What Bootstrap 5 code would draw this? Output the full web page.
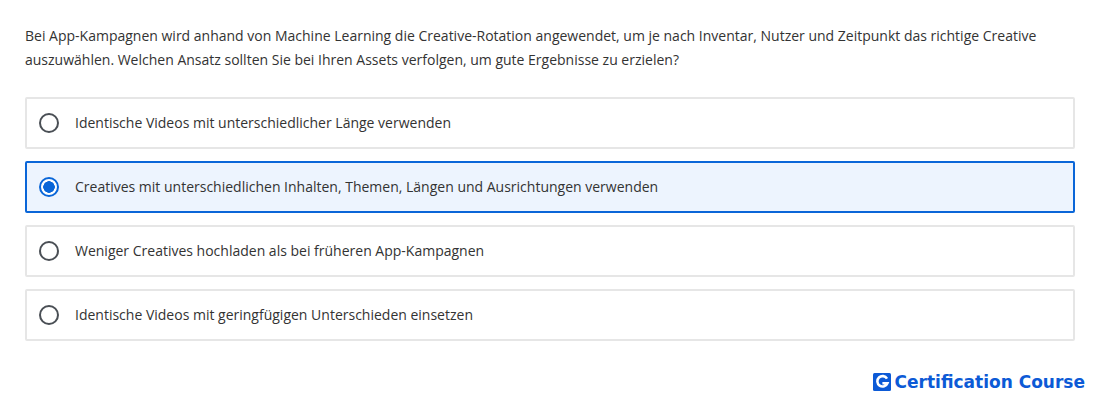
<!DOCTYPE html>
<html lang="de">
<head>
<meta charset="utf-8">
<title>Quiz</title>
<link href="https://cdn.jsdelivr.net/npm/bootstrap@5.3.0/dist/css/bootstrap.min.css" rel="stylesheet">
<style>
html,body{height:401px;overflow:hidden;background:#fff}
body{font-family:"Open Sans","Noto Sans",sans-serif;font-size:14px;color:#333}
.quiz-wrap{padding:24px 25px 0}
.quiz-q{line-height:24px;margin:0 0 25px;color:#333}
.quiz-list{gap:12px}
.quiz-opt{height:52px;border:2px solid #e6e6e6;border-radius:2px;padding:0 12px;gap:16px;color:#333;background:#fff}
.quiz-opt.is-on{border-color:#0a66d8;background:#edf4fe}
.quiz-radio{width:20px;height:20px;border:2px solid #4a4f55;border-radius:50%;flex:none;background:#fff}
.is-on .quiz-radio{border-color:#0a66d8;background:radial-gradient(circle,#0a66d8 0,#0a66d8 5.5px,#fff 6px)}
.quiz-label{margin-top:-1px;padding-bottom:1px}
.quiz-brand{padding:30px 15px 0 0;gap:4px;color:#0c5ad6;font-family:"DejaVu Sans","Inter",sans-serif;font-weight:700;font-size:17px;line-height:22px}
.quiz-logo{width:18px;height:18px;flex:none}
</style>
</head>
<body>
<div class="quiz-wrap">
<p class="quiz-q">Bei App-Kampagnen wird anhand von Machine Learning die Creative-Rotation angewendet, um je nach Inventar, Nutzer und Zeitpunkt das richtige Creative auszuwählen. Welchen Ansatz sollten Sie bei Ihren Assets verfolgen, um gute Ergebnisse zu erzielen?</p>
<div class="quiz-list d-flex flex-column">
<div class="quiz-opt d-flex align-items-center"><span class="quiz-radio"></span><span class="quiz-label">Identische Videos mit unterschiedlicher Länge verwenden</span></div>
<div class="quiz-opt is-on d-flex align-items-center"><span class="quiz-radio"></span><span class="quiz-label">Creatives mit unterschiedlichen Inhalten, Themen, Längen und Ausrichtungen verwenden</span></div>
<div class="quiz-opt d-flex align-items-center"><span class="quiz-radio"></span><span class="quiz-label">Weniger Creatives hochladen als bei früheren App-Kampagnen</span></div>
<div class="quiz-opt d-flex align-items-center"><span class="quiz-radio"></span><span class="quiz-label">Identische Videos mit geringfügigen Unterschieden einsetzen</span></div>
</div>
</div>
<div class="quiz-brand d-flex justify-content-end align-items-center">
<svg class="quiz-logo" viewBox="0 0 18 18" aria-hidden="true"><rect width="18" height="18" rx="1.5" fill="#0c5ad6"/><path d="M14 5.6A5.2 5.2 0 1 0 14.4 10.2H9.4" fill="none" stroke="#fff" stroke-width="2.6"/></svg>
<span>Certification Course</span>
</div>
</body>
</html>
